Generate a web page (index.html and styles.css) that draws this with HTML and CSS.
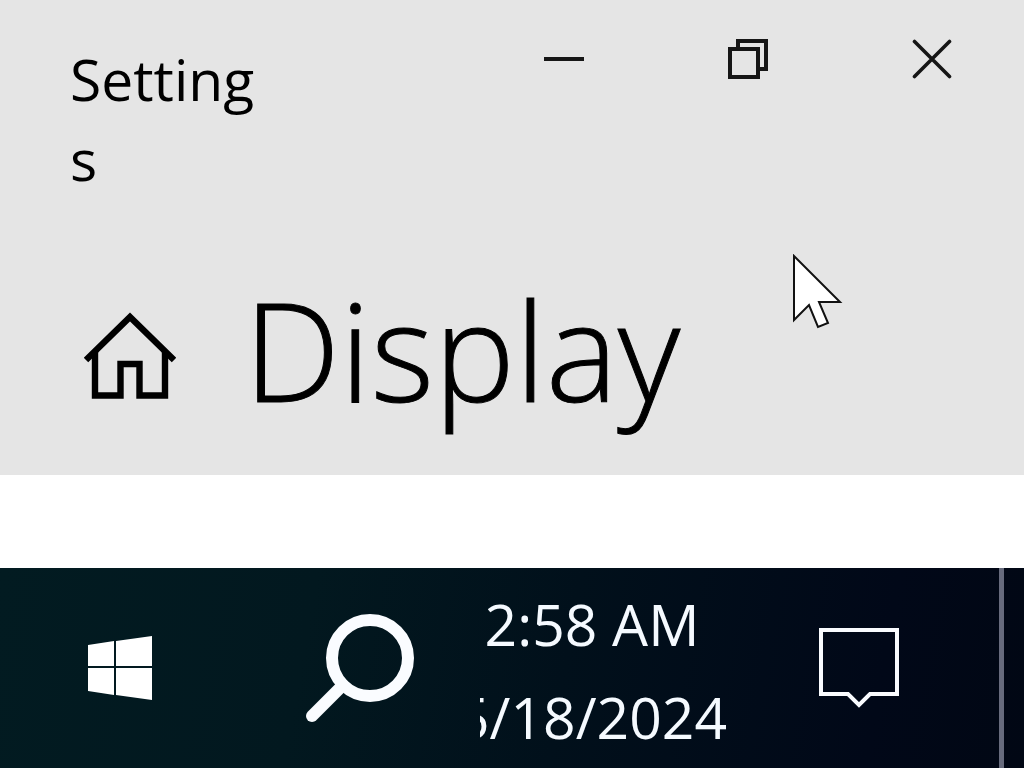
FILE: index.html
```html
<!DOCTYPE html>
<html lang="en">
<head>
<meta charset="utf-8">
<meta name="viewport" content="width=device-width, initial-scale=1">
<title>Settings</title>
<link rel="stylesheet" href="styles.css">
</head>
<body>
<main class="window">
  <header class="window-header">
    <div class="titlebar">
      <div class="window-title">Settings</div>
      <div class="window-controls">
        <button class="control" type="button" aria-label="Minimize">
          <svg width="40" height="40" viewBox="0 0 40 40"><path d="M0 20H40" stroke="#161616" stroke-width="4"/></svg>
        </button>
        <button class="control" type="button" aria-label="Restore">
          <svg width="40" height="40" viewBox="0 0 40 40" fill="none" stroke="#161616" stroke-width="4"><path d="M2 10H30V38H2Z"/><path d="M10 10V2H38V30H30"/></svg>
        </button>
        <button class="control" type="button" aria-label="Close">
          <svg width="40" height="40" viewBox="0 0 40 40"><path d="M2.5 2.5L37.5 37.5M37.5 2.5L2.5 37.5" stroke="#161616" stroke-width="3.6" stroke-linecap="round"/></svg>
        </button>
      </div>
    </div>
    <div class="page-heading">
      <a class="home" href="#" aria-label="Home">
        <svg width="92" height="88" viewBox="0 0 92 88" fill="none" stroke="#000" stroke-width="6.4"><path d="M2 48L46 5L90 48"/><path d="M11 39V83.500H36.500V52H55.500V83.500H81V39"/></svg>
      </a>
      <h1 class="page-title">Display</h1>
    </div>
  </header>
</main>
<footer class="taskbar">
  <button class="task-button" type="button" aria-label="Start">
    <svg width="64" height="64" viewBox="0 0 64 64" fill="#fff"><path d="M0 9L26 5V30H0Z"/><path d="M28 5L64 0V30H28Z"/><path d="M0 32H26V59L0 55Z"/><path d="M28 32H64V64L28 59Z"/></svg>
  </button>
  <button class="task-button" type="button" aria-label="Search">
    <svg width="108" height="110" viewBox="0 0 108 110" fill="none" stroke="#fafcff"><circle cx="64" cy="45" r="38" stroke-width="12"/><path d="M37 72L6 103" stroke-width="12" stroke-linecap="round"/></svg>
  </button>
  <div class="clock">
    <time>2:58 AM</time>
    <time>5/18/2024</time>
  </div>
  <button class="task-button notifications" type="button" aria-label="Notifications">
    <svg width="80" height="80" viewBox="0 0 80 80" fill="none" stroke="#fafcff" stroke-width="4"><path d="M2 2H78V66H51L40 77L29 66H2Z"/></svg>
  </button>
  <button class="show-desktop" type="button" aria-label="Show desktop"></button>
</footer>
<svg class="cursor" width="52" height="76" viewBox="0 0 52 76" aria-hidden="true"><path d="M2 2V66L17 51L26 73L36 69L27 48H48Z" fill="#fff" stroke="#111" stroke-width="2"/></svg>
</body>
</html>
```

FILE: styles.css
```css
* {
  box-sizing: border-box;
}

body {
  margin: 0;
  min-height: 100vh;
  display: flex;
  flex-direction: column;
  background: #fff;
  color: #000;
  font-family: "Open Sans", "Noto Sans", sans-serif;
}

button {
  margin: 0;
  padding: 0;
  border: 0;
  background: none;
}

svg {
  display: block;
}

.window {
  flex: 1;
}

.window-header {
  background: #e5e5e5;
  padding-bottom: 24px;
}

.titlebar {
  display: flex;
  justify-content: space-between;
  align-items: flex-start;
}

.window-title {
  width: 262px;
  padding: 39px 0 0 70px;
  font-size: 57px;
  line-height: 80px;
  word-break: break-all;
}

.window-controls {
  display: flex;
}

.control {
  width: 184px;
  height: 118px;
  display: grid;
  place-items: center;
}

.page-heading {
  display: flex;
  align-items: center;
  gap: 68px;
  padding: 62px 84px 0;
}

.page-title {
  margin: 0;
  padding-bottom: 12px;
  font-size: 136px;
  font-weight: 300;
  line-height: 178px;
  -webkit-text-stroke: 1px #000;
}

.taskbar {
  display: grid;
  grid-template-columns: 240px 240px 248px 1fr 25px;
  min-height: 200px;
  background: linear-gradient(100deg, #021b21 0%, #02181f 30%, #01101b 55%, #010818 85%, #010714 100%);
  color: #f5faff;
}

.task-button {
  display: grid;
  place-items: center;
}

.notifications {
  padding-right: 10px;
}

.clock {
  display: flex;
  flex-direction: column;
  align-items: center;
  justify-content: center;
  overflow: hidden;
  padding: 6px 24px 0 0;
  font-size: 57px;
  line-height: 93px;
  white-space: nowrap;
}

.show-desktop {
  border-left: 5px solid #676b7d;
}

.cursor {
  position: absolute;
  left: 792px;
  top: 254px;
}
```
